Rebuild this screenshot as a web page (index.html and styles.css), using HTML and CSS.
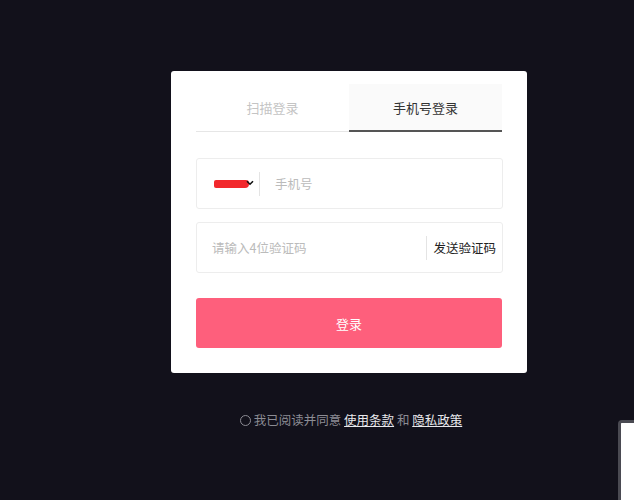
FILE: index.html
```html
<!DOCTYPE html>
<html lang="zh-CN">
<head>
    <meta charset="UTF-8">
    <meta name="viewport" content="width=device-width, initial-scale=1.0">
    <title>登录</title>
    <link rel="stylesheet" href="styles.css">
</head>
<body>

    <div class="wrap">
        <div class="card">
            <div class="tabs">
                <div class="tab">扫描登录</div>
                <div class="tab active">手机号登录</div>
            </div>

            <div class="field">
                <div class="country">
                    <span class="scribble"></span>
                    <svg class="chev" width="8" height="6" viewBox="0 0 8 6">
                        <path d="M1 1.2 L4 4.2 L7 1.2" fill="none" stroke="#111" stroke-width="1.6"/>
                    </svg>
                </div>
                <span class="sep"></span>
                <span class="ph phone">手机号</span>
            </div>

            <div class="field code">
                <span class="ph">请输入4位验证码</span>
                <span class="sep"></span>
                <span class="send">发送验证码</span>
            </div>

            <button class="btn1">登录</button>
        </div>

        <p class="agree">
            <span class="radio"></span>我已阅读并同意 <a href="#">使用条款</a> 和 <a href="#">隐私政策</a>
        </p>
    </div>

    <div class="peek"></div>

</body>
</html>
```

FILE: styles.css
```css
html {
    overflow: hidden;
}

body {
    background-color: #12111b;
    margin: 0;
    padding: 0;
    font-family: "Noto Sans CJK SC", "Noto Sans", sans-serif;
    overflow: hidden;
    height: 500px;
    position: relative;
}

.wrap {
    width: 356px;
    margin-left: 171px;
    padding-top: 71px;
}

.card {
    background-color: #fff;
    border-radius: 3px;
    padding: 13px 25px 25px;
}

.tabs {
    display: flex;
    margin-bottom: 26px;
}

.tab {
    flex: 1;
    height: 47px;
    display: flex;
    align-items: center;
    justify-content: center;
    font-size: 13px;
    color: #c4c4c4;
    border-bottom: 1px solid #e6e6e6;
}

.tab.active {
    background-color: #fafafa;
    color: #333;
    height: 46px;
    border-bottom: 2px solid #555;
}

.field {
    height: 49px;
    border: 1px solid #ededed;
    border-radius: 3px;
    display: flex;
    align-items: center;
    margin-bottom: 13px;
    margin-right: -1px;
}

.field.code {
    margin-bottom: 25px;
    padding-left: 15px;
}

.country {
    width: 45px;
    padding-left: 17px;
    display: flex;
    align-items: center;
}

.scribble {
    display: block;
    width: 35px;
    height: 8px;
    background-color: #f2282c;
    border-radius: 2px 3px 4px 2px;
}

.chev {
    margin-left: -3px;
    margin-top: -2px;
}

.sep {
    width: 1px;
    height: 24px;
    background-color: #e4e4e4;
}

.ph {
    font-size: 12.5px;
    color: #bbb;
}

.ph.phone {
    margin-left: 15px;
}

.code .ph {
    flex: 1;
}

.send {
    font-size: 12.5px;
    color: #222;
    padding: 0 6px;
}

.btn1 {
    display: block;
    width: 100%;
    height: 50px;
    border: none;
    border-radius: 3px;
    background-color: #fe5f7c;
    color: #fff;
    font-family: inherit;
    font-size: 13px;
    cursor: pointer;
}

.agree {
    margin: 37px 0 0 4px;
    text-align: center;
    font-size: 12.5px;
    color: #8c8c94;
}

.radio {
    display: inline-block;
    width: 9px;
    height: 9px;
    border: 1px solid #8c8c94;
    border-radius: 50%;
    margin-right: 3px;
    vertical-align: -1px;
}

.agree a {
    color: #e8e8ec;
}

.peek {
    position: absolute;
    left: 618px;
    top: 420px;
    width: 40px;
    height: 80px;
    box-sizing: border-box;
    background-color: #fff;
    border: 3px solid #4a4a52;
    border-bottom: none;
    border-radius: 4px 4px 0 0;
}
```
